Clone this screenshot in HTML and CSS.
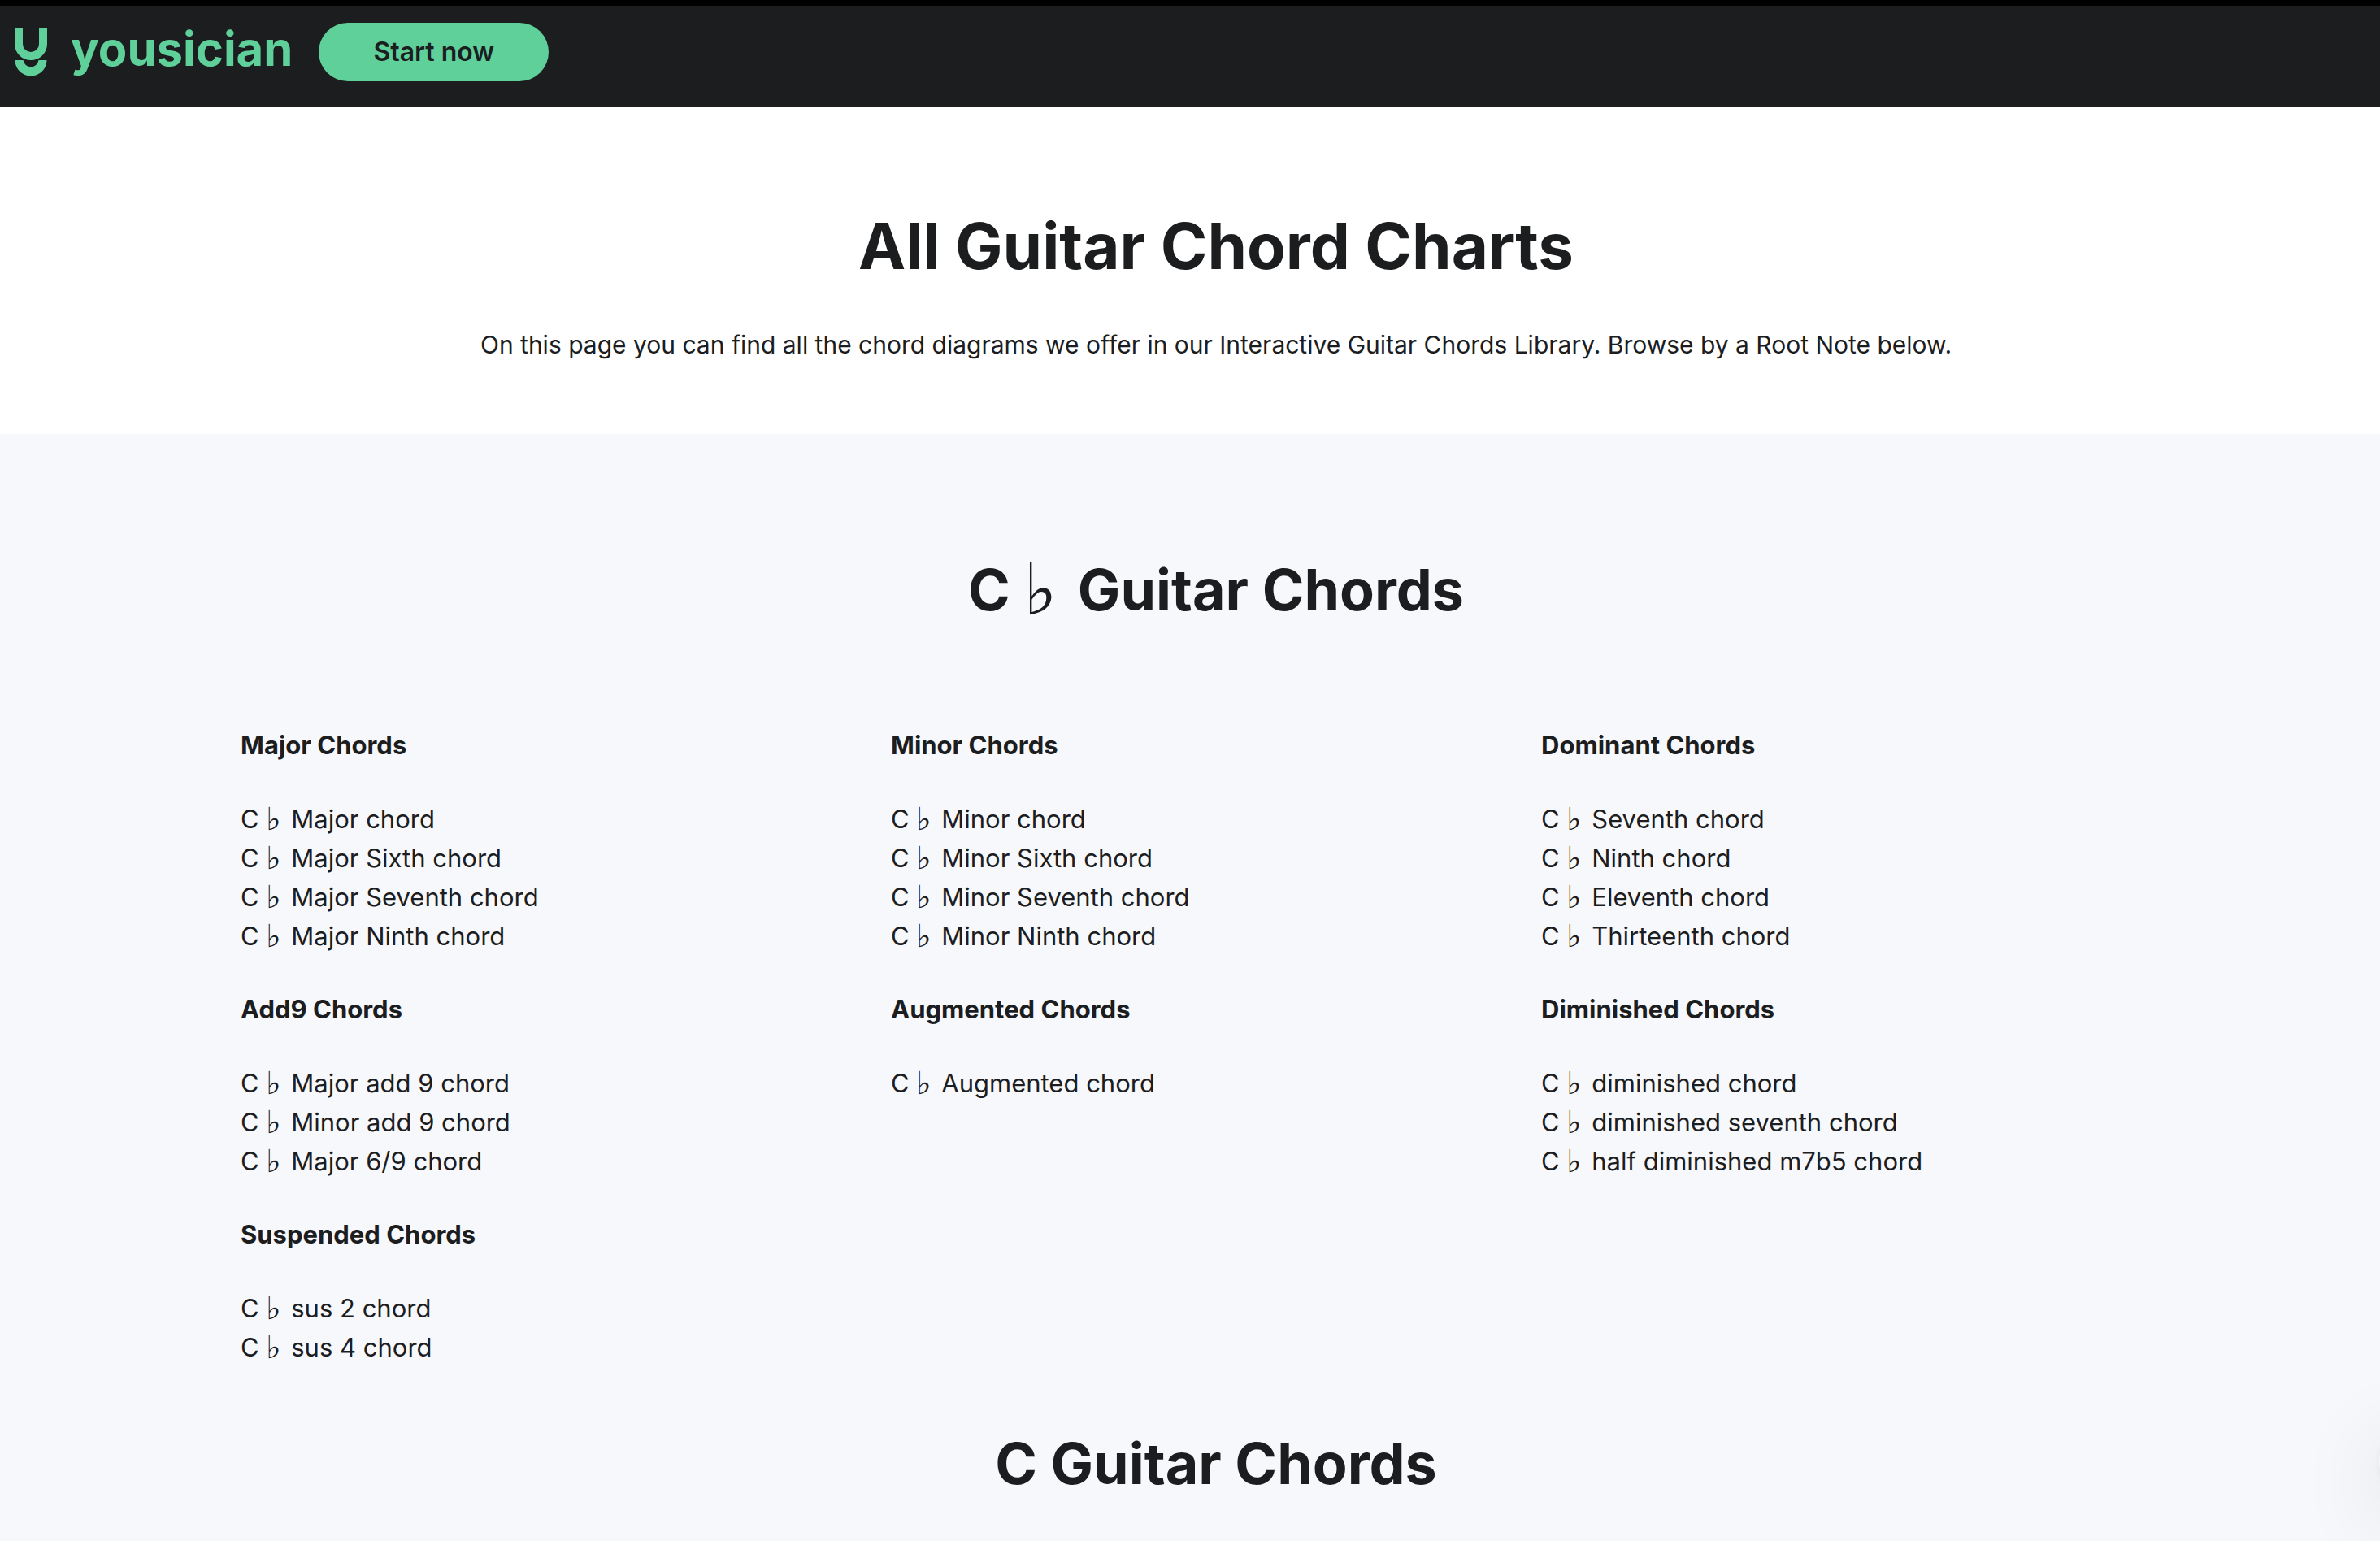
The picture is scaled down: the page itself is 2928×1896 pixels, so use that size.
FILE: index.html
```html
<!DOCTYPE html>
<html lang="en">
<head>
  <meta charset="utf-8">
  <meta name="viewport" content="width=device-width, initial-scale=1">
  <title>All Guitar Chord Charts | Yousician</title>
  <link rel="stylesheet" href="styles.css">
</head>
<body>
  <header class="site-header">
    <a class="brand" href="#">
      <svg class="brand-mark" viewBox="0 0 40 58" aria-hidden="true">
        <path d="M0 0H10V19A10 10 0 0 0 30 19V0H40V19A20 20 0 0 1 0 19Z"/>
        <path d="M0.500 39H10.500A9.600 9.600 0 0 0 29.500 39H39.500A19.500 19.500 0 0 1 0.500 39Z"/>
      </svg>
      <span class="brand-name">yousician</span>
    </a>
    <button class="start-button" type="button">Start now</button>
  </header>

  <main>
    <section class="intro">
      <h1>All Guitar Chord Charts</h1>
      <p>On this page you can find all the chord diagrams we offer in our Interactive Guitar Chords Library. Browse by a Root Note below.</p>
    </section>

    <div class="library">
      <section class="root-note">
        <h2>C <span class="flat">♭</span> Guitar Chords</h2>
        <div class="groups">
          <section>
            <h3>Major Chords</h3>
            <ul>
              <li><a href="#">C <span class="flat">♭</span> Major chord</a></li>
              <li><a href="#">C <span class="flat">♭</span> Major Sixth chord</a></li>
              <li><a href="#">C <span class="flat">♭</span> Major Seventh chord</a></li>
              <li><a href="#">C <span class="flat">♭</span> Major Ninth chord</a></li>
            </ul>
          </section>
          <section>
            <h3>Minor Chords</h3>
            <ul>
              <li><a href="#">C <span class="flat">♭</span> Minor chord</a></li>
              <li><a href="#">C <span class="flat">♭</span> Minor Sixth chord</a></li>
              <li><a href="#">C <span class="flat">♭</span> Minor Seventh chord</a></li>
              <li><a href="#">C <span class="flat">♭</span> Minor Ninth chord</a></li>
            </ul>
          </section>
          <section>
            <h3>Dominant Chords</h3>
            <ul>
              <li><a href="#">C <span class="flat">♭</span> Seventh chord</a></li>
              <li><a href="#">C <span class="flat">♭</span> Ninth chord</a></li>
              <li><a href="#">C <span class="flat">♭</span> Eleventh chord</a></li>
              <li><a href="#">C <span class="flat">♭</span> Thirteenth chord</a></li>
            </ul>
          </section>
          <section>
            <h3>Add9 Chords</h3>
            <ul>
              <li><a href="#">C <span class="flat">♭</span> Major add 9 chord</a></li>
              <li><a href="#">C <span class="flat">♭</span> Minor add 9 chord</a></li>
              <li><a href="#">C <span class="flat">♭</span> Major 6/9 chord</a></li>
            </ul>
          </section>
          <section>
            <h3>Augmented Chords</h3>
            <ul>
              <li><a href="#">C <span class="flat">♭</span> Augmented chord</a></li>
            </ul>
          </section>
          <section>
            <h3>Diminished Chords</h3>
            <ul>
              <li><a href="#">C <span class="flat">♭</span> diminished chord</a></li>
              <li><a href="#">C <span class="flat">♭</span> diminished seventh chord</a></li>
              <li><a href="#">C <span class="flat">♭</span> half diminished m7b5 chord</a></li>
            </ul>
          </section>
          <section>
            <h3>Suspended Chords</h3>
            <ul>
              <li><a href="#">C <span class="flat">♭</span> sus 2 chord</a></li>
              <li><a href="#">C <span class="flat">♭</span> sus 4 chord</a></li>
            </ul>
          </section>
        </div>
      </section>

      <section class="root-note">
        <h2>C Guitar Chords</h2>
      </section>
    </div>
  </main>

  <button class="chat-launcher" type="button" aria-label="Open chat"></button>
</body>
</html>
```
FILE: styles.css
```css
* {
  box-sizing: border-box;
}

body,
h1,
h2,
h3,
p,
ul {
  margin: 0;
  padding: 0;
}

body {
  min-height: 100vh;
  display: flex;
  flex-direction: column;
  overflow-x: hidden;
  background: #fff;
  color: #1c1d1f;
  font-family: Inter, "Liberation Sans", sans-serif;
  font-size: 31px;
  line-height: 48px;
}

a {
  color: inherit;
  text-decoration: none;
}

.site-header {
  display: flex;
  align-items: center;
  gap: 32px;
  padding: 21px 18px 32px;
  border-top: 7px solid #000;
  background: #1c1d1f;
}

.brand {
  display: flex;
  align-items: center;
  gap: 29px;
  color: #5fd09a;
}

.brand-mark {
  width: 40px;
  height: 58px;
  fill: currentColor;
}

.brand-name {
  padding-bottom: 8px;
  font-size: 58px;
  font-weight: 700;
  line-height: 64px;
}

.start-button {
  height: 72px;
  padding: 0 67px;
  border: 0;
  border-radius: 36px;
  background: #5fd09a;
  color: #1c1d1f;
  font: 600 32px/48px Inter, "Liberation Sans", sans-serif;
}

main {
  flex: 1;
  display: flex;
  flex-direction: column;
}

.intro {
  padding: 123px 0 86px 64px;
  text-align: center;
}

h1 {
  margin-bottom: 49px;
  font-size: 78px;
  font-weight: 700;
  line-height: 96px;
}

.intro p {
  font-size: 30px;
}

.library {
  flex: 1;
  display: flex;
  flex-direction: column;
  gap: 75px;
  padding: 148px 0 52px 64px;
  background: #f7f8fc;
}

.root-note {
  width: 100%;
  max-width: 2400px;
  margin: 0 auto;
}

h2 {
  font-size: 70px;
  font-weight: 700;
  line-height: 88px;
  text-align: center;
}

.groups {
  display: grid;
  grid-template-columns: repeat(3, 1fr);
  row-gap: 42px;
  margin-top: 123px;
}

h3 {
  margin-bottom: 43px;
  font-size: 31px;
  font-weight: 700;
  line-height: 48px;
}

ul {
  list-style: none;
}

.flat {
  margin-right: 0.1em;
  font-family: "DejaVu Sans", sans-serif;
  font-size: 1.25em;
  font-weight: 400;
  line-height: 0;
  vertical-align: -0.06em;
}

/* Parked just past the right edge; only its shadow reaches the page. */
.chat-launcher {
  position: fixed;
  right: -95px;
  bottom: 50px;
  width: 96px;
  height: 96px;
  border: 0;
  border-radius: 50%;
  background: #f7f8fc;
  box-shadow: 0 2px 12px rgba(0, 0, 0, 0.06), 0 24px 112px rgba(0, 0, 0, 0.12);
}
```
